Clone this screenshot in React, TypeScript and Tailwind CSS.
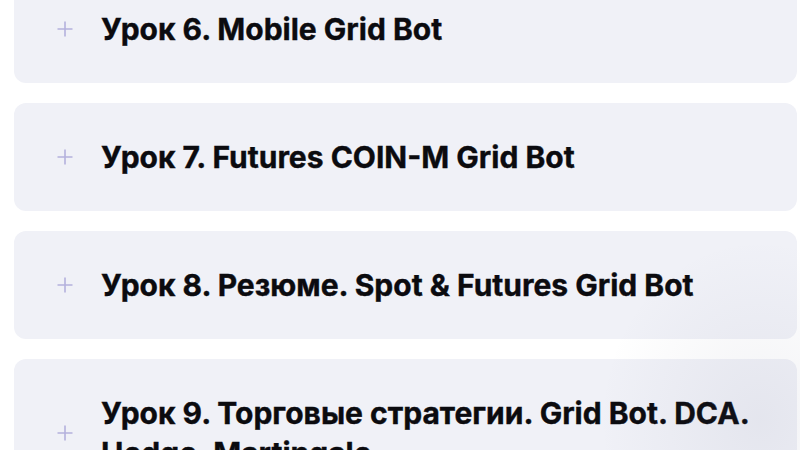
import React from "react";

const lessons = [
  "Урок 6. Mobile Grid Bot",
  "Урок 7. Futures COIN-M Grid Bot",
  "Урок 8. Резюме. Spot & Futures Grid Bot",
  "Урок 9. Торговые стратегии. Grid Bot. DCA. Hedge. Martingale",
];

function Plus() {
  return (
    <svg width="16" height="16" viewBox="0 0 16 16" className="shrink-0">
      <path d="M8 0.5V15.5M0.5 8H15.5" stroke="#b4b1dd" strokeWidth="1.6" />
    </svg>
  );
}

export default function App() {
  return (
    <div
      className="relative w-[800px] h-[450px] overflow-hidden bg-white"
      style={{ fontFamily: "Inter, 'Noto Sans', sans-serif" }}
    >
      <div className="flex flex-col gap-5 pl-[14px] pr-[3px] mt-[-25px]">
        {lessons.map((t) => (
          <div
            key={t}
            className="flex items-center gap-[28px] rounded-[12px] bg-[#f0f1f7] pl-[43px] pr-10 py-[34px]"
          >
            <Plus />
            <div className="text-[30px] leading-[40px] font-bold tracking-[0em] text-[#0b0b0f] [-webkit-text-stroke:0.4px_#0b0b0f]">
              {t}
            </div>
          </div>
        ))}
      </div>
      <div className="pointer-events-none absolute right-[-120px] bottom-[-150px] w-[320px] h-[360px] rounded-full bg-[radial-gradient(closest-side,rgba(90,95,130,0.08),rgba(90,95,130,0))]" />
    </div>
  );
}
